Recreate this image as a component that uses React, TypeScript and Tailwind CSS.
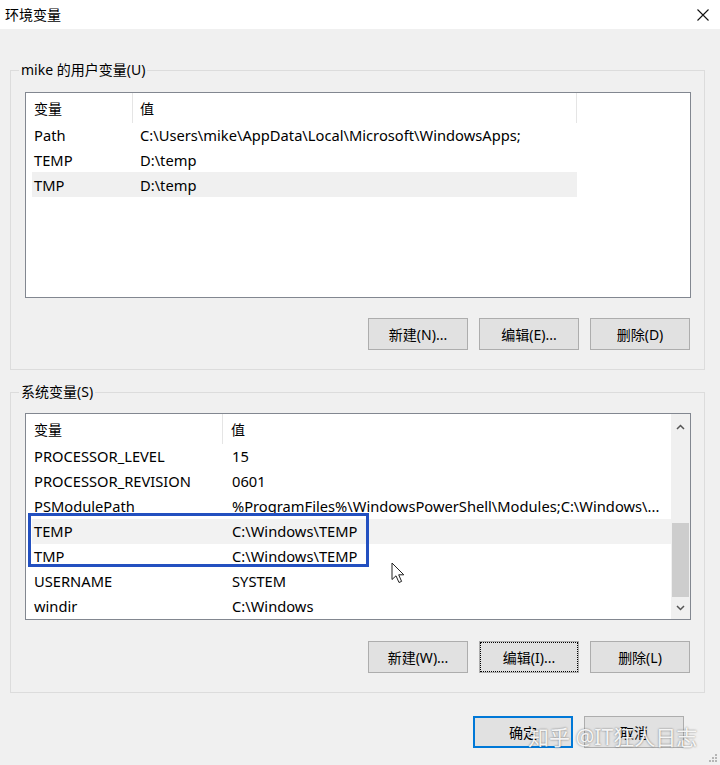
import React from 'react';

const font = "font-['Noto_Sans','Noto_Sans_CJK_SC',sans-serif]";

function Btn({ label, focused, isDefault }: { label: string; focused?: boolean; isDefault?: boolean }) {
  return (
    <button
      className={`w-[100px] h-[32px] bg-[#e1e1e1] text-[14px] text-black flex items-center justify-center ${
        isDefault ? 'border-2 border-[#0078d7]' : 'border border-[#adadad]'
      } ${focused ? 'outline-1 outline-dotted outline-black -outline-offset-2' : ''}`}
    >
      {label}
    </button>
  );
}

const userVars = [
  { name: 'Path', value: 'C:\\Users\\mike\\AppData\\Local\\Microsoft\\WindowsApps;' },
  { name: 'TEMP', value: 'D:\\temp' },
  { name: 'TMP', value: 'D:\\temp', selected: true },
];

const sysVars = [
  { name: 'PROCESSOR_LEVEL', value: '15' },
  { name: 'PROCESSOR_REVISION', value: '0601' },
  { name: 'PSModulePath', value: '%ProgramFiles%\\WindowsPowerShell\\Modules;C:\\Windows\\...' },
  { name: 'TEMP', value: 'C:\\Windows\\TEMP', selected: true },
  { name: 'TMP', value: 'C:\\Windows\\TEMP' },
  { name: 'USERNAME', value: 'SYSTEM' },
  { name: 'windir', value: 'C:\\Windows' },
];

export default function App() {
  return (
    <div className={`relative w-[720px] h-[765px] bg-[#f0f0f0] overflow-hidden text-black ${font}`}>
      {/* title bar */}
      <div className="h-[29px] bg-white flex items-center justify-between pl-[5px] pr-[11px]">
        <span className="text-[14px] leading-none">环境变量</span>
        <svg width="12" height="12" viewBox="0 0 12 12">
          <path d="M0.5 0.5 L11.5 11.5 M11.5 0.5 L0.5 11.5" stroke="#111" strokeWidth="1.1" fill="none" />
        </svg>
      </div>

      {/* user variables */}
      <fieldset className="mt-[31px] ml-[10px] mr-[15px] border border-[#dcdcdc] pl-[14px] pr-[13px] pt-[12px] pb-[19px]">
        <legend className="-ml-[6px] px-[2px] text-[14px] leading-[20px]">mike 的用户变量(U)</legend>
        <div className="h-[206px] border border-[#828790] bg-white">
          <div className="h-[30px] flex text-[14px]">
            <div className="w-[107px] pl-[8px] flex items-center border-r border-[#e5e5e5]">变量</div>
            <div className="w-[444px] pl-[7px] flex items-center border-r border-[#e5e5e5]">值</div>
          </div>
          {userVars.map((v) => (
            <div
              key={v.name}
              className={`ml-[6px] w-[545px] h-[24.7px] flex items-center text-[14.7px] whitespace-nowrap ${
                v.selected ? 'bg-[#f0f0f0]' : ''
              }`}
            >
              <div className="w-[100px] pl-[2px]">{v.name}</div>
              <div className="pl-[8px]">{v.value}</div>
            </div>
          ))}
        </div>
        <div className="flex justify-end gap-[11px] mt-[20px] pr-[1px]">
          <Btn label="新建(N)..." />
          <Btn label="编辑(E)..." />
          <Btn label="删除(D)" />
        </div>
      </fieldset>

      {/* system variables */}
      <fieldset className="mt-[12px] ml-[10px] mr-[15px] border border-[#dcdcdc] pl-[14px] pr-[13px] pt-[11px] pb-[19px]">
        <legend className="-ml-[6px] px-[2px] text-[14px] leading-[20px]">系统变量(S)</legend>
        <div className="relative h-[207px] border border-[#828790] bg-white flex">
          <div className="flex-1 min-w-0">
            <div className="h-[30px] flex text-[14px]">
              <div className="w-[197px] pl-[8px] flex items-center border-r border-[#e5e5e5]">变量</div>
              <div className="pl-[8px] flex items-center">值</div>
            </div>
            {sysVars.map((v) => (
              <div
                key={v.name}
                className={`ml-[6px] h-[24.9px] flex items-center text-[14.7px] whitespace-nowrap overflow-hidden ${
                  v.selected ? 'bg-[#f2f2f2]' : ''
                }`}
              >
                <div className="w-[191px] shrink-0 pl-[2px]">{v.name}</div>
                <div className="pl-[9px]">{v.value}</div>
              </div>
            ))}
          </div>
          {/* scrollbar */}
          <div className="w-[19px] bg-[#f0f0f0] flex flex-col">
            <div className="h-[25px] flex items-center justify-center">
              <svg width="9" height="6" viewBox="0 0 9 6">
                <path d="M1 5 L4.5 1.5 L8 5" stroke="#555" strokeWidth="1.5" fill="none" />
              </svg>
            </div>
            <div className="flex-1 px-[1px]">
              <div className="mt-[84px] h-[74px] bg-[#cdcdcd]" />
            </div>
            <div className="h-[22px] flex items-center justify-center">
              <svg width="9" height="6" viewBox="0 0 9 6">
                <path d="M1 1 L4.5 4.5 L8 1" stroke="#555" strokeWidth="1.5" fill="none" />
              </svg>
            </div>
          </div>
          {/* highlight annotation */}
          <div className="absolute left-[2px] top-[99px] w-[341px] h-[54px] border-[3px] border-[#2350c0]" />
          {/* mouse cursor */}
          <svg className="absolute left-[365px] top-[148px]" width="15" height="23" viewBox="0 0 15 23">
            <path
              d="M1 1 L1 17.5 L5 13.8 L8 20.5 L10.6 19.4 L7.7 12.8 L12.8 12.8 Z"
              fill="white"
              stroke="#222"
              strokeWidth="1"
              strokeLinejoin="round"
            />
          </svg>
        </div>
        <div className="flex justify-end gap-[11px] mt-[21px] pr-[1px]">
          <Btn label="新建(W)..." />
          <Btn label="编辑(I)..." focused />
          <Btn label="删除(L)" />
        </div>
      </fieldset>

      {/* dialog buttons */}
      <div className="flex justify-end gap-[11px] mt-[23px] pr-[36px]">
        <Btn label="确定" isDefault />
        <Btn label="取消" />
      </div>

      {/* watermark */}
      <div className="absolute left-[528px] top-[724px] text-[21px] leading-[26px] text-white/90 whitespace-nowrap [text-shadow:0_0_2px_rgba(0,0,0,0.55)]">
        知乎 @IT狂人日志
      </div>

      {/* resize grip */}
      <svg className="absolute right-[2px] bottom-[2px]" width="10" height="10" viewBox="0 0 10 10">
        <g fill="#b5b5b5">
          <rect x="7" y="1" width="2" height="2" />
          <rect x="4" y="4" width="2" height="2" />
          <rect x="7" y="4" width="2" height="2" />
          <rect x="1" y="7" width="2" height="2" />
          <rect x="4" y="7" width="2" height="2" />
          <rect x="7" y="7" width="2" height="2" />
        </g>
      </svg>
    </div>
  );
}
